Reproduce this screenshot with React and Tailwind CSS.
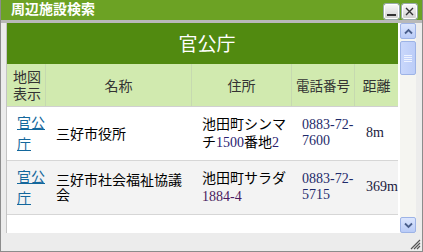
import React from "react";

const jp = "font-['Noto_Sans_CJK_JP','Noto_Sans_CJK_SC',sans-serif]";
const serif = "font-['Liberation_Serif',serif]";

function Num({ children, color = "text-[#20205a]" }) {
  return <span className={`${serif} ${color} text-[14px]`}>{children}</span>;
}

function WinBtn({ kind }) {
  return (
    <div className="w-[15px] h-[15px] rounded-[2px] border border-white bg-gradient-to-b from-[#f7f7f7] to-[#d2d2d2] shadow-[0_0_0_1px_#9aa]  flex items-center justify-center">
      {kind === "min" ? (
        <svg width="11" height="11" viewBox="0 0 11 11">
          <rect x="1" y="8" width="9" height="2" fill="#333" />
        </svg>
      ) : (
        <svg width="11" height="11" viewBox="0 0 11 11">
          <path d="M2 2 L9 9 M9 2 L2 9" stroke="#333" strokeWidth="1.4" />
        </svg>
      )}
    </div>
  );
}

function ScrollBtn({ dir }) {
  return (
    <div className="w-[16px] h-[16px] rounded-[2px] border border-[#9db3e6] bg-gradient-to-b from-[#dce6fd] to-[#b9cbf7] flex items-center justify-center">
      <svg width="9" height="7" viewBox="0 0 9 7">
        {dir === "up" ? (
          <path d="M1 5.5 L4.5 2 L8 5.5" stroke="#4a5f8c" strokeWidth="1.8" fill="none" />
        ) : (
          <path d="M1 1.5 L4.5 5 L8 1.5" stroke="#4a5f8c" strokeWidth="1.8" fill="none" />
        )}
      </svg>
    </div>
  );
}

const cols = "grid grid-cols-[39px_146px_100px_63px_43px]";

function Row({ bg, name, addr, phone1, phone2, dist }) {
  return (
    <div className={`${cols} h-[59px] ${bg} border-b border-[#d6d6d6]`}>
      <div className="pl-[10px] flex items-center">
        <a className="text-[#13679c] underline text-[14px] leading-[21px] break-all">官公庁</a>
      </div>
      <div className="pl-[10px] flex items-center text-[14px] leading-[15px] text-black">{name}</div>
      <div className="pl-[10px] pr-[4px] flex items-center text-[14px] leading-[18px] text-black">{addr}</div>
      <div className="pl-[10px] flex flex-col justify-center leading-[16px]">
        <Num color="text-[#1e2a6a]">{phone1}</Num>
        <Num color="text-[#1e2a6a]">{phone2}</Num>
      </div>
      <div className="pl-[11px] flex items-center leading-[16px] whitespace-nowrap">
        <Num color="text-[#1a1a40]">{dist}</Num>
      </div>
    </div>
  );
}

export default function App() {
  return (
    <div className={`${jp} relative w-[423px] h-[252px] bg-[#ececec] border-x border-b border-[#8c8c8c] flex flex-col overflow-hidden`}>
      <div className="h-[20px] shrink-0 bg-[#6ca224] flex items-start justify-between">
        <span className="pl-[10px] text-white font-bold text-[14px] leading-[17px]">周辺施設検索</span>
        <div className="flex gap-[3px] pt-[4px] pr-[5px]">
          <WinBtn kind="min" />
          <WinBtn kind="close" />
        </div>
      </div>
      <div className="h-[3px] shrink-0 bg-[#b9b9b9]" />
      <div className="flex pl-[5px] shrink-0">
        <div className="flex h-[210px] bg-white border-l border-[#c4c4c4]">
          <div className="w-[391px] h-[210px] overflow-hidden flex flex-col">
            <div className="h-[41px] shrink-0 bg-[#518a10] text-white text-[19px] flex items-center justify-center pl-[9px]">
              官公庁
            </div>
            <div className={`${cols} h-[43px] shrink-0 bg-[#d1eaaf] border-b border-[#d0d0d0] text-[#333] text-[14px]`}>
              <div className="pl-[6px] flex items-center leading-[17px] border-r border-[#c6d9b0]">地図<br />表示</div>
              <div className="flex items-center justify-center border-r border-[#c6d9b0]">名称</div>
              <div className="flex items-center justify-center border-r border-[#c6d9b0]">住所</div>
              <div className="flex items-center justify-center border-r border-[#c6d9b0] text-[13.5px]">電話番号</div>
              <div className="flex items-center justify-center">距離</div>
            </div>
            <Row
              bg="bg-white"
              name="三好市役所"
              addr={<span>池田町シンマチ<Num color="text-[#2a2070]">1500</Num>番地<Num color="text-[#2a2070]">2</Num></span>}
              phone1="0883-72-"
              phone2="7600"
              dist="8m"
            />
            <Row
              bg="bg-[#f3f3f3]"
              name="三好市社会福祉協議会"
              addr={<span>池田町サラダ <Num color="text-[#4a1a60]">1884-4</Num></span>}
              phone1="0883-72-"
              phone2="5715"
              dist="369m"
            />
            <div className="h-[20px] bg-white" />
          </div>
          <div className="w-[2px]" />
          <div className="w-[16px] h-[210px] bg-[#f5f5f1] flex flex-col">
            <ScrollBtn dir="up" />
            <div className="mt-[2px] w-[16px] h-[34px] rounded-[2px] border border-[#9db3e6] bg-gradient-to-r from-[#c9d7fb] to-[#bccdf8] flex items-center justify-center">
              <svg width="8" height="9" viewBox="0 0 8 9">
                <path d="M0 1.5 H8 M0 3.5 H8 M0 5.5 H8 M0 7.5 H8" stroke="#eef3ff" strokeWidth="1" />
              </svg>
            </div>
            <div className="flex-1" />
            <ScrollBtn dir="down" />
          </div>
        </div>
      </div>
      <svg className="absolute right-[1px] bottom-[1px]" width="12" height="12" viewBox="0 0 12 12">
        <path d="M11 2 L2 11 M11 5 L5 11 M11 8 L8 11" stroke="#555" strokeWidth="1.2" />
      </svg>
    </div>
  );
}
